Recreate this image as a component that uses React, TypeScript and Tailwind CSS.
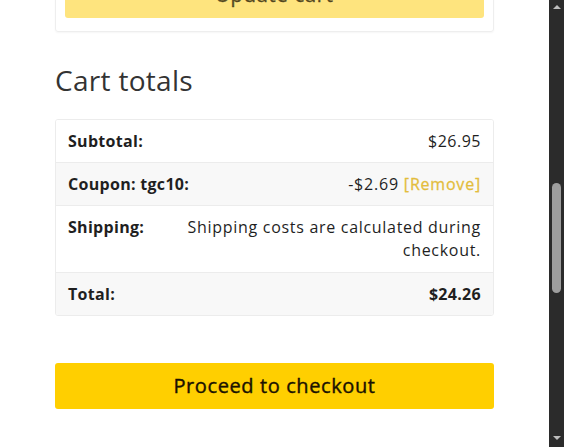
import React from 'react';

export default function App() {
  return (
    <div className="flex h-screen w-full overflow-hidden bg-white font-['Open_Sans',sans-serif] text-[#1f1f1f]">
      <div className="flex-1 overflow-hidden">
        <div className="ml-[55px] w-[439px]">
          {/* cart actions card, scrolled partly out of view */}
          <div className="-mt-[29px] rounded-b-[3px] border border-[#eeeeee] px-[9px] pb-[13px] shadow-[0_1px_2px_rgba(0,0,0,0.04)]">
            <button className="flex h-[46px] w-full items-center justify-center rounded-[3px] bg-[#fee47e] text-[20px] tracking-[0.8px] text-[#1a1200]/70 [-webkit-text-stroke:0.4px_currentColor]">
              Update cart
            </button>
          </div>

          <h2 className="mt-[30px] text-[28px] leading-[36px] tracking-[0.3px] text-[#333]">Cart totals</h2>

          <div className="mt-[21px] overflow-hidden rounded-[3px] border border-[#ececec] text-[16px] leading-[23px] tracking-[0.3px]">
            <div className="flex justify-between border-b border-[#ececec] bg-white pt-[10px] pb-[9px] pl-[12px] pr-[12px]">
              <div className="font-bold">Subtotal:</div>
              <div className="text-right tracking-[0.5px]">$26.95</div>
            </div>
            <div className="flex justify-between border-b border-[#ececec] bg-[#f8f8f8] pt-[10px] pb-[9px] pl-[12px] pr-[12px]">
              <div className="font-bold">Coupon: tgc10:</div>
              <div className="text-right tracking-[0.8px]">
                -$2.69 <span className="text-[#e3bd3c] [-webkit-text-stroke:0.3px_currentColor]">[Remove]</span>
              </div>
            </div>
            <div className="flex border-b border-[#ececec] bg-white pt-[10px] pb-[10px] pl-[12px] pr-[12px]">
              <div className="w-[116px] shrink-0 font-bold">Shipping:</div>
              <div className="flex-1 text-right tracking-[0.7px]">Shipping costs are calculated during checkout.</div>
            </div>
            <div className="flex justify-between bg-[#f8f8f8] pt-[10px] pb-[9px] pl-[12px] pr-[12px]">
              <div className="font-bold">Total:</div>
              <div className="text-right font-bold">$24.26</div>
            </div>
          </div>

          <button className="mt-[47px] flex h-[46px] w-full items-center justify-center rounded-[3px] bg-[#ffcf00] text-[20px] tracking-[0.6px] text-[#1a1200] [-webkit-text-stroke:0.4px_currentColor]">
            Proceed to checkout
          </button>
        </div>
      </div>

      {/* scrollbar */}
      <div className="flex w-[15px] flex-col items-center bg-[#2b2b2b]">
        <div className="mt-[5px] h-0 w-0 border-x-[4px] border-b-[4px] border-x-transparent border-b-[#bdbdbd]" />
        <div className="mt-[174px] h-[110px] w-[9px] rounded-[5px] bg-[#9e9e9e]" />
        <div className="mt-auto mb-[7px] h-0 w-0 border-x-[4px] border-t-[4px] border-x-transparent border-t-[#bdbdbd]" />
      </div>
    </div>
  );
}
